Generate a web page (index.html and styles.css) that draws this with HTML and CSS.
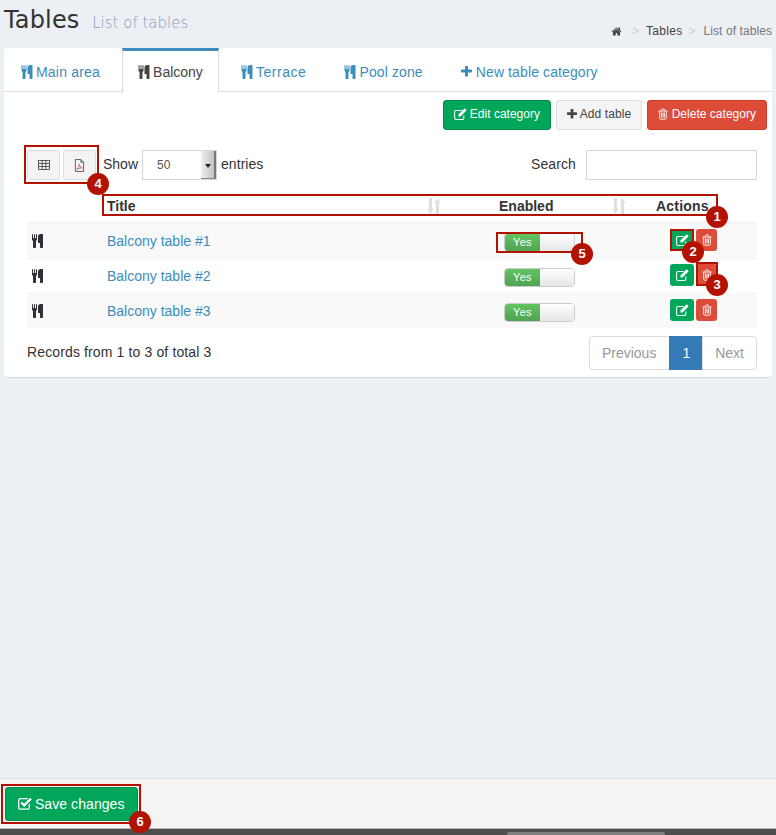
FILE: index.html
```html
<!DOCTYPE html>
<html lang="en">
<head>
<meta charset="utf-8">
<title>Tables</title>
<link rel="stylesheet" href="styles.css">
</head>
<body>
<svg class="defs" width="0" height="0" aria-hidden="true">
  <defs>
    <symbol id="i-cutlery" viewBox="0 0 1408 1792"><path fill="currentColor" d="M640 64v640q0 61-35.500 111t-92.500 70v779q0 52-38 90t-90 38h-128q-52 0-90-38t-38-90v-779q-57-20-92.500-70t-35.500-111v-640q0-26 19-45t45-19 45 19 19 45v416q0 26 19 45t45 19 45-19 19-45v-416q0-26 19-45t45-19 45 19 19 45v416q0 26 19 45t45 19 45-19 19-45v-416q0-26 19-45t45-19 45 19 19 45zm768 0v1600q0 52-38 90t-90 38h-128q-52 0-90-38t-38-90v-512h-224q-13 0-22.500-9.500t-9.500-22.500v-800q0-132 94-226t226-94h256q26 0 45 19t19 45z"/></symbol>
    <symbol id="i-plus" viewBox="192 192 1408 1408"><path fill="currentColor" d="M1600 736v192q0 40-28 68t-68 28h-416v416q0 40-28 68t-68 28h-192q-40 0-68-28t-28-68v-416h-416q-40 0-68-28t-28-68v-192q0-40 28-68t68-28h416v-416q0-40 28-68t68-28h192q40 0 68 28t28 68v416h416q40 0 68 28t28 68z"/></symbol>
    <symbol id="i-home" viewBox="0 192 1792 1408"><path fill="currentColor" d="M1472 992v480q0 26-19 45t-45 19h-384v-384h-256v384h-384q-26 0-45-19t-19-45v-480q0-1 .5-3t.5-3l575-474 575 474q1 2 1 6zm223-69l-62 74q-8 9-21 11h-3q-13 0-21-7l-692-577-692 577q-12 8-24 7-13-2-21-11l-62-74q-8-10-7-23.500t11-21.500l719-599q32-26 76-26t76 26l244 204v-195q0-14 9-23t23-9h192q14 0 23 9t9 23v408l219 182q10 8 11 21.500t-7 23.500z"/></symbol>
    <symbol id="i-edit" viewBox="0 0 14 13"><path fill="none" stroke="currentColor" stroke-width="1.200" d="M10.600 8v2.800a1.600 1.600 0 0 1-1.600 1.600H2.200A1.600 1.600 0 0 1 .6 10.800V4.300a1.600 1.600 0 0 1 1.600-1.600h6"/><path fill="currentColor" d="M11.500.3l2.200 2.200-6.700 6.700H4.800V7z"/></symbol>
    <symbol id="i-trash" viewBox="0 0 12 14"><path fill="none" stroke="currentColor" stroke-width="1.100" d="M2 3.500v8.300c0 .8.500 1.400 1.100 1.400h5.800c.6 0 1.100-.6 1.100-1.400V3.500M.6 3.400h10.800M3.800 3.200l.7-1.900c.1-.3.4-.5.6-.5h1.800c.2 0 .5.200.6.500l.7 1.900M4.300 5.200v6M6 5.200v6M7.700 5.200v6"/></symbol>
    <symbol id="i-check" viewBox="0 0 14 13"><path fill="none" stroke="currentColor" stroke-width="1.300" d="M11.300 7v3.500a1.700 1.700 0 0 1-1.700 1.700H2.300A1.700 1.700 0 0 1 .7 10.500V3.300a1.700 1.700 0 0 1 1.700-1.700h7.300"/><path fill="none" stroke="currentColor" stroke-width="2.200" d="M3.300 5.500l2.900 2.900L13 1.600"/></symbol>
    <symbol id="i-sort" viewBox="0 0 14 16"><path fill="currentColor" d="M2 0h3v10.500h1.800L3.500 16 .2 10.500H2zM9 16h3V5.500h1.800L10.500 0 7.200 5.500H9z"/></symbol>
  </defs>
</svg>

<main class="page">
  <header class="page-head">
    <h1 class="title">Tables <small class="subtitle">List of tables</small></h1>
    <ol class="crumbs">
      <li><svg class="ico-home"><use href="#i-home"/></svg></li>
      <li class="sep">&gt;</li>
      <li class="crumb-link">Tables</li>
      <li class="sep">&gt;</li>
      <li class="crumb-now">List of tables</li>
    </ol>
  </header>

  <section class="box">
    <nav class="tabs">
      <a class="tab"><svg class="ico-cut"><use href="#i-cutlery"/></svg><span class="lbl-main">Main area</span></a>
      <a class="tab tab-active"><svg class="ico-cut"><use href="#i-cutlery"/></svg><span>Balcony</span></a>
      <a class="tab"><svg class="ico-cut"><use href="#i-cutlery"/></svg><span class="lbl-terrace">Terrace</span></a>
      <a class="tab"><svg class="ico-cut"><use href="#i-cutlery"/></svg><span class="lbl-pool">Pool zone</span></a>
      <a class="tab"><svg class="ico-plus"><use href="#i-plus"/></svg><span class="lbl-new">New table category</span></a>
    </nav>

    <div class="top-actions">
      <a class="btn btn-green"><svg class="ico-12"><use href="#i-edit"/></svg> Edit category</a>
      <a class="btn btn-grey"><svg class="ico-plus-sm"><use href="#i-plus"/></svg> Add table</a>
      <a class="btn btn-red"><svg class="ico-trash-sm"><use href="#i-trash"/></svg> Delete category</a>
    </div>

    <div class="toolbar">
      <div class="tool-left">
        <a class="tool-btn">
          <svg class="ico-tool" viewBox="0 0 12 12"><path fill="none" stroke="#555" d="M.5 1.500h11v9H.5zM.5 4.500h11M.5 7.500h11M4.200 1.500v9M7.800 1.500v9"/></svg>
        </a>
        <a class="tool-btn">
          <svg class="ico-pdf" viewBox="0 0 12 14"><path fill="none" stroke="#555" d="M1.500.5h6l3 3v10h-9zM7.500.5v3h3"/><path fill="none" stroke="#c0564a" stroke-width=".9" d="M3 11.500c1.500-1 2.500-3.500 2.500-5.500 0-.8.600-.8.600 0 0 2 1.400 3.500 3 3.600-2 0-4.500.5-6.100 1.900z"/></svg>
        </a>
        <label class="show">Show</label>
        <div class="fake-select"><span class="fake-value">50</span><span class="fake-arrow"></span></div>
        <span class="entries">entries</span>
      </div>
      <div class="tool-right">
        <label class="search-label">Search</label>
        <input class="search" type="text" aria-label="Search">
      </div>
    </div>

    <table class="grid">
      <colgroup><col class="c-icon"><col class="c-title"><col class="c-enabled"><col class="c-actions"></colgroup>
      <thead>
        <tr>
          <th></th>
          <th><div class="th-in">Title<svg class="ico-sort sort-title"><use href="#i-sort"/></svg></div></th>
          <th><div class="th-in">Enabled<svg class="ico-sort sort-enabled"><use href="#i-sort"/></svg></div></th>
          <th class="th-actions">Actions</th>
        </tr>
      </thead>
      <tbody>
        <tr class="odd">
          <td><svg class="ico-row"><use href="#i-cutlery"/></svg></td>
          <td><a class="row-link">Balcony table #1</a></td>
          <td><div class="switch"><span class="sw-on">Yes</span><span class="sw-off"></span></div></td>
          <td><div class="row-actions"><a class="mini btn-green"><svg class="ico-12"><use href="#i-edit"/></svg></a><a class="mini btn-red"><svg class="ico-trash-sm"><use href="#i-trash"/></svg></a></div></td>
        </tr>
        <tr>
          <td><svg class="ico-row"><use href="#i-cutlery"/></svg></td>
          <td><a class="row-link">Balcony table #2</a></td>
          <td><div class="switch"><span class="sw-on">Yes</span><span class="sw-off"></span></div></td>
          <td><div class="row-actions"><a class="mini btn-green"><svg class="ico-12"><use href="#i-edit"/></svg></a><a class="mini btn-red"><svg class="ico-trash-sm"><use href="#i-trash"/></svg></a></div></td>
        </tr>
        <tr class="odd">
          <td><svg class="ico-row"><use href="#i-cutlery"/></svg></td>
          <td><a class="row-link">Balcony table #3</a></td>
          <td><div class="switch"><span class="sw-on">Yes</span><span class="sw-off"></span></div></td>
          <td><div class="row-actions"><a class="mini btn-green"><svg class="ico-12"><use href="#i-edit"/></svg></a><a class="mini btn-red"><svg class="ico-trash-sm"><use href="#i-trash"/></svg></a></div></td>
        </tr>
      </tbody>
    </table>

    <div class="table-foot">
      <span class="records">Records from 1 to 3 of total 3</span>
      <div class="pager">
        <a class="pg pg-first">Previous</a>
        <a class="pg pg-current">1</a>
        <a class="pg pg-last">Next</a>
      </div>
    </div>
  </section>
</main>

<footer class="save-bar">
  <a class="btn-save"><svg class="ico-check"><use href="#i-check"/></svg> Save changes</a>
</footer>
<div class="strip"><span class="strip-tab"></span></div>

<div class="notes">
  <span class="note-box nb1"></span><span class="note-num n1">1</span>
  <span class="note-box nb2"></span><span class="note-num n2">2</span>
  <span class="note-box nb3"></span><span class="note-num n3">3</span>
  <span class="note-box nb4"></span><span class="note-num n4">4</span>
  <span class="note-box nb5"></span><span class="note-num n5">5</span>
  <span class="note-box nb6"></span><span class="note-num n6">6</span>
</div>
</body>
</html>
```
FILE: styles.css
```css
* { box-sizing: border-box; }
html, body { height: 100%; margin: 0; }
body {
  position: relative;
  display: flex;
  flex-direction: column;
  overflow: hidden;
  background: #ecf0f5;
  color: #333;
  font: 14px/20px "Liberation Sans", Arial, sans-serif;
}
a { color: inherit; text-decoration: none; }
.defs { position: absolute; }

.page { flex: 1; padding: 0 4px; }
.page-head { height: 48px; display: flex; justify-content: space-between; }
.title {
  margin: 0;
  padding-top: 5px;
  font: 500 24px/30px "DejaVu Sans", sans-serif;
  letter-spacing: .15px;
  color: #333;
}
.subtitle { margin-left: 5px; font-size: 15px; font-weight: 300; letter-spacing: 0; color: #8499b5; }
.crumbs {
  display: flex;
  list-style: none;
  margin: 0;
  padding: 21px 0 0;
  font-size: 12px;
  line-height: 20px;
  color: #444;
}
.crumbs .sep { margin: 0 7px 0 10px; color: #ccc; }
.crumbs .sep:nth-child(4) { margin: 0 8px 0 6px; }
.crumb-link { letter-spacing: .3px; }
.crumb-now { color: #777; letter-spacing: .08px; }
.ico-home { display: block; width: 11px; height: 9px; margin-top: 6px; color: #444; }

.box {
  height: 329px;
  display: flex;
  flex-direction: column;
  background: #fff;
  border-radius: 3px;
  box-shadow: 0 1px 1px rgba(0, 0, 0, .1);
}
.tabs { height: 44px; display: flex; padding-left: 1px; border-bottom: 1px solid #ddd; }
.tab {
  display: flex;
  gap: 3px;
  height: 44px;
  margin-right: 6px;
  padding: 11px 15px 0;
  border: 1px solid transparent;
  border-top-width: 3px;
  border-bottom: 0;
  color: #3c8dbc;
  white-space: nowrap;
  line-height: 20px;
}
.tab-active {
  height: 45px;
  background: #fff;
  border-color: #3c8dbc #ddd #fff;
  color: #444;
}
.lbl-main { letter-spacing: .2px; }
.lbl-terrace { letter-spacing: .55px; }
.lbl-pool { letter-spacing: .12px; }
.lbl-new { letter-spacing: .11px; }
.ico-cut { width: 12px; height: 14px; margin-top: 3px; }
.ico-plus { width: 11px; height: 11px; margin-top: 4px; margin-right: 1px; }
.ico-12 { width: 13px; height: 12px; vertical-align: -2px; }
.ico-plus-sm { width: 10px; height: 10px; vertical-align: -1px; }
.ico-trash-sm { width: 10px; height: 12px; vertical-align: -2px; }

.top-actions { display: flex; justify-content: flex-end; gap: 5px; padding: 8px 5px 0 0; }
.btn {
  height: 30px;
  padding: 3px 10px;
  border: 1px solid transparent;
  border-radius: 3px;
  font-size: 12px;
  line-height: 20px;
  white-space: nowrap;
}
.btn-green { background: #00a65a; border-color: #008d4c; color: #fff; }
.btn-red { background: #dd4b39; border-color: #d73925; color: #fff; letter-spacing: .02px; }
.btn-grey { background: #f4f4f4; border-color: #ddd; color: #444; letter-spacing: .1px; }

.toolbar { display: flex; justify-content: space-between; padding: 20px 15px 0 23px; }
.tool-left, .tool-right { display: flex; align-items: center; height: 30px; }
.tool-btn {
  display: flex;
  align-items: center;
  justify-content: center;
  width: 33px;
  height: 30px;
  margin-right: 3px;
  background: #f4f4f4;
  border: 1px solid #ddd;
  border-radius: 3px;
}
.ico-tool { width: 12px; height: 12px; }
.ico-pdf { width: 11px; height: 13px; }
.show { margin: -2px 4px 0; }
.fake-select {
  display: flex;
  width: 75px;
  height: 30px;
  border: 1px solid #d2d6de;
  font-size: 12px;
  color: #555;
}
.fake-value { flex: 1; padding: 4px 0 0 14px; }
.fake-arrow {
  position: relative;
  width: 15px;
  background: linear-gradient(to right, #eee, #c4c4c4);
  border-right: 2px solid #777;
  border-bottom: 1px solid #888;
}
.fake-arrow::after {
  content: "";
  position: absolute;
  left: 4px;
  top: 13px;
  border: 3px solid transparent;
  border-top: 4px solid #222;
  border-bottom: 0;
}
.entries { margin: -2px 0 0 4px; letter-spacing: .05px; }
.search-label { margin: -2px 10px 0 0; letter-spacing: .1px; }
.search { width: 171px; height: 30px; border: 1px solid #d2d6de; background: #fff; padding: 0; }

.grid {
  table-layout: fixed;
  width: 730px;
  margin: 10px 0 0 23px;
  border-collapse: collapse;
}
.c-icon { width: 72px; }
.c-title { width: 392px; }
.c-enabled { width: 157px; }
.c-actions { width: 109px; }
.grid th {
  height: 33px;
  padding: 0 8px 1px;
  border-bottom: 2px solid #f4f4f4;
  text-align: left;
  vertical-align: middle;
  font-weight: 700;
}
.th-in { display: flex; justify-content: space-between; align-items: center; }
.th-actions { letter-spacing: .2px; }
.ico-sort { width: 14px; height: 16px; color: #e0e0e0; }
.sort-title { margin-right: 42px; }
.sort-enabled { margin-right: 14px; }
.grid td { height: 35px; padding: 0 8px; border-top: 1px solid #f4f4f4; vertical-align: middle; }
.grid tbody tr:first-child td { border-top: 0; }
.odd { background: #f9f9f9; }
.grid td:first-child { padding-left: 5px; }
.ico-row { display: block; width: 11px; height: 14px; color: #332f38; }
.row-link { color: #3c8dbc; }
.switch {
  display: flex;
  width: 71px;
  height: 19px;
  margin: 3px 0 0 5px;
  border: 1px solid #ccc;
  border-radius: 4px;
  overflow: hidden;
  font-size: 11px;
  letter-spacing: .3px;
  line-height: 17px;
}
.sw-on { width: 35px; background: linear-gradient(#62c462, #51a351); color: #fff; text-align: center; }
.sw-off { flex: 1; background: linear-gradient(#fff, #e6e6e6); }
.row-actions { display: flex; gap: 2px; padding-left: 14px; margin-top: -1px; }
.mini {
  display: flex;
  align-items: center;
  justify-content: center;
  height: 22px;
  width: 24px;
  border-radius: 3px;
  border: 1px solid transparent;
}
.mini.btn-red { width: 21px; }

.table-foot { display: flex; justify-content: space-between; padding: 8px 15px 0 23px; }
.records { padding-top: 6px; letter-spacing: .13px; }
.pager { display: flex; height: 34px; }
.pg { padding: 6px 12px; border: 1px solid #ddd; margin-left: -1px; background: #fff; color: #999; }
.pg-first { padding-right: 13px; border-radius: 4px 0 0 4px; }
.pg-last { border-radius: 0 4px 4px 0; }
.pg-current { background: #337ab7; border-color: #337ab7; color: #fff; }

.save-bar {
  height: 50px;
  padding: 8px 5px;
  background: #f4f4f4;
  border-top: 1px solid #ddd;
}
.btn-save {
  display: inline-block;
  width: 133px;
  height: 34px;
  padding: 6px 12px;
  background: #00a65a;
  border: 1px solid #008d4c;
  border-radius: 3px;
  color: #fff;
  white-space: nowrap;
  letter-spacing: .07px;
}
.ico-check { width: 14px; height: 13px; margin-right: -1px; vertical-align: -1px; }
.strip {
  height: 7px;
  display: flex;
  align-items: flex-end;
  padding-left: 507px;
  background: #4d4d4d;
  border-top: 1px solid #b5b5b5;
}
.strip-tab { width: 158px; height: 3px; background: #808080; border-radius: 2px 2px 0 0; }

.notes { position: absolute; inset: 0; pointer-events: none; }
.note-box { position: absolute; border: 2px solid #b31200; }
.note-num {
  position: absolute;
  width: 22px;
  height: 22px;
  border-radius: 50%;
  background: #b31200;
  color: #fff;
  font-size: 13px;
  font-weight: 700;
  line-height: 22px;
  text-align: center;
}
.nb1 { left: 102px; top: 194px; width: 616px; height: 22px; }
.nb2 { left: 670px; top: 229px; width: 24px; height: 22px; }
.nb3 { left: 696px; top: 262px; width: 22px; height: 24px; }
.nb4 { left: 24px; top: 145px; width: 75px; height: 39px; }
.nb5 { left: 496px; top: 232px; width: 87px; height: 21px; }
.nb6 { left: 1px; top: 784px; width: 140px; height: 40px; }
.n1 { left: 706px; top: 206px; }
.n2 { left: 682px; top: 241px; }
.n3 { left: 706px; top: 274px; }
.n4 { left: 87px; top: 173px; }
.n5 { left: 571px; top: 243px; }
.n6 { left: 129px; top: 811px; }
```
